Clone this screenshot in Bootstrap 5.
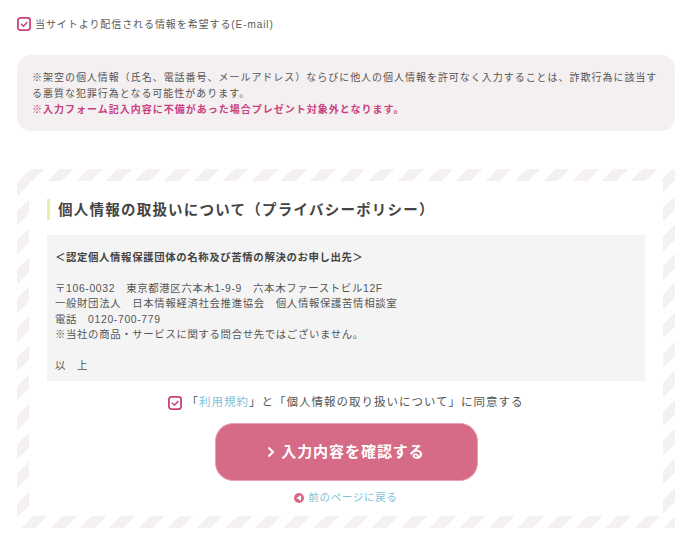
<!DOCTYPE html>
<html lang="ja">
<head>
<meta charset="utf-8">
<title>個人情報の取扱いについて</title>
<link href="https://cdn.jsdelivr.net/npm/bootstrap@5.3.0/dist/css/bootstrap.min.css" rel="stylesheet">
<style>
html,body{height:556px;overflow:hidden}
body{background:#fff;color:#555;font-family:"Liberation Sans","Noto Sans CJK JP",sans-serif;font-size:10px;letter-spacing:.92px;padding:0 25px 0 17px}
.chk{flex:none;width:14px;height:14px;display:block}
.mail-row{height:16px;margin-top:16px;margin-bottom:23px;gap:4px;color:#5a5a5a}
.notice{background:#f4eff0;border-radius:14px;height:76px;padding:15px 15px 0;line-height:16px;font-size:10px;letter-spacing:.97px;margin-bottom:38px}
.notice strong{color:#c8417f;display:block;font-weight:700;letter-spacing:1px}
.stripes{height:359px;padding:12px;background:repeating-linear-gradient(135deg,#fff 0,#fff 9.2px,#f5f0f1 9.2px,#f5f0f1 19.5px,#fff 19.5px,#fff 20.64px)}
.sheet{background:#fff;height:335px;padding:18px 18px 0}
.ttl{border-left:3px solid #e9f0a8;font-size:14.5px;font-weight:700;letter-spacing:1.23px;line-height:20px;padding:1px 0 0 8px;margin:0 0 15px;color:#444}
.policy{background:#f4f4f4;height:146px;padding:15px 8px 0;line-height:15.6px;font-size:10.4px;letter-spacing:.65px;color:#555;margin-bottom:14px}
.policy p{margin:0 0 15px}
.policy b{font-weight:700;letter-spacing:.63px;color:#444}
.agree{height:16px;gap:4px;font-size:11.5px;letter-spacing:1px;color:#555;margin-bottom:12px}
.agree a,.back a{color:#7cc3d9;text-decoration:none}
.go{width:263px;height:58px;border-radius:18px;background:#d56b86;border:1px solid #e9a3b5;color:#fff;font-weight:700;font-size:15px;letter-spacing:.95px;gap:6px}
.go:hover{background:#d56b86;color:#fff}
.back{font-size:10.4px;letter-spacing:.8px;margin-top:9px;gap:4px;height:15px}
.dot{flex:none;width:10px;height:10px;display:block}
</style>
</head>
<body>
<label class="mail-row d-flex align-items-center">
  <svg class="chk" viewBox="0 0 14 14"><rect x=".9" y=".9" width="12.2" height="12.2" rx="2.500" fill="#fff" stroke="#c8417f" stroke-width="1.8"/><path d="M4 6.800l2.400 2.400L10.400 5" fill="none" stroke="#c8417f" stroke-width="1.500"/></svg>
  <span>当サイトより配信される情報を希望する(E-mail)</span>
</label>
<div class="notice">※架空の個人情報（氏名、電話番号、メールアドレス）ならびに他人の個人情報を許可なく入力することは、詐欺行為に該当する悪質な犯罪行為となる可能性があります。<strong>※入力フォーム記入内容に不備があった場合プレゼント対象外となります。</strong></div>
<section class="stripes">
  <div class="sheet">
    <h2 class="ttl">個人情報の取扱いについて（プライバシーポリシー）</h2>
    <div class="policy">
      <p><b>＜認定個人情報保護団体の名称及び苦情の解決のお申し出先＞</b></p>
      <p>〒106-0032　東京都港区六本木1-9-9　六本木ファーストビル12F<br>一般財団法人　日本情報経済社会推進協会　個人情報保護苦情相談室<br>電話　0120-700-779<br>※当社の商品・サービスに関する問合せ先ではございません。</p>
      <p>以　上</p>
    </div>
    <label class="agree d-flex align-items-center justify-content-center">
      <svg class="chk" viewBox="0 0 14 14"><rect x=".9" y=".9" width="12.2" height="12.2" rx="2.500" fill="#fff" stroke="#c8417f" stroke-width="1.8"/><path d="M4 6.800l2.400 2.400L10.400 5" fill="none" stroke="#c8417f" stroke-width="1.500"/></svg>
      <span>「<a href="#">利用規約</a>」と「個人情報の取り扱いについて」に同意する</span>
    </label>
    <div class="d-flex justify-content-center">
      <button type="button" class="btn go d-flex align-items-center justify-content-center p-0">
        <svg width="8" height="12" viewBox="0 0 8 12"><path d="M1.500 1.500L6 6l-4.500 4.500" fill="none" stroke="#fff" stroke-width="2"/></svg>
        <span>入力内容を確認する</span>
      </button>
    </div>
    <div class="back d-flex align-items-center justify-content-center">
      <svg class="dot" viewBox="0 0 10 10"><circle cx="5" cy="5" r="5" fill="#d56b86"/><path d="M2.500 5L7 2.200v5.600z" fill="#fff"/></svg>
      <a href="#">前のページに戻る</a>
    </div>
  </div>
</section>
</body>
</html>
